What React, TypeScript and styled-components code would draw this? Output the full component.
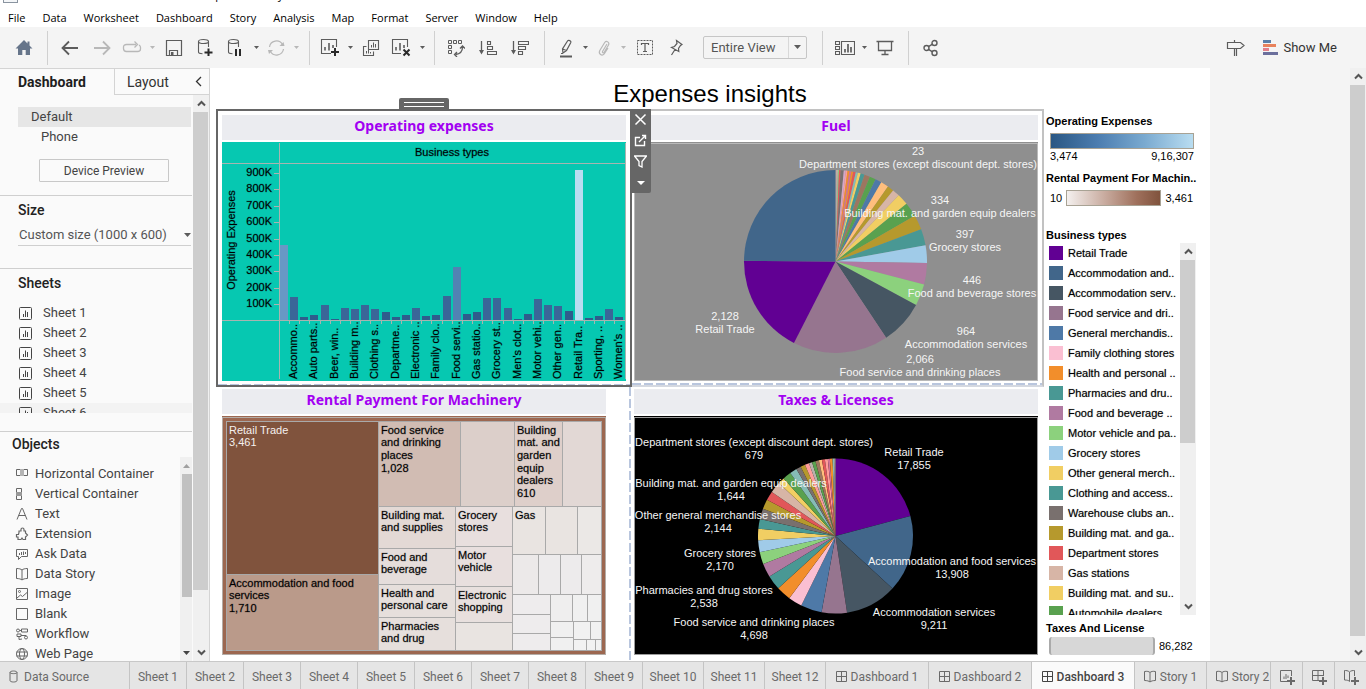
import React from "react";
import styled, { createGlobalStyle, css } from "styled-components";

const ARIAL = `"Liberation Sans", Arial, sans-serif`;
const UI = `Roboto, "Liberation Sans", sans-serif`;
const MENU = `"Open Sans", "Noto Sans", sans-serif`;

const GlobalStyle = createGlobalStyle`
  * { box-sizing: border-box; }
  html, body, #root { height: 100%; }
  body { margin: 0; overflow: hidden; background: #fff; font-family: ${UI}; color: #444; }
  button, select, input { font: inherit; color: inherit; margin: 0; padding: 0; border: 0; background: none; border-radius: 0; }
  ul { list-style: none; margin: 0; padding: 0; }
  h1, h2, h3 { margin: 0; }
  svg { display: block; flex: none; }
`;

/* ---------- window frame ---------- */

const Page = styled.div`
  display: flex;
  flex-direction: column;
  height: 100vh;
`;

const TitleBar = styled.header`
  display: flex;
  align-items: flex-end;
  height: 5px;
  padding-left: 3px;
  overflow: hidden;
  font: 11px/20px ${MENU};
  color: #000;
  white-space: nowrap;
`;

const AppMark = styled.span`
  width: 15px;
  height: 16px;
  margin: 0 12px 2px 0;
  border: 1px solid #8a94a0;
  background: #f4f6f8;
`;

const MenuBar = styled.nav`
  display: flex;
  align-items: center;
  height: 22px;
  padding: 3px 0 0 8px;
  gap: 17px;
  font: 11px/16px ${MENU};
  color: #000;
  white-space: nowrap;
`;

const Toolbar = styled.div`
  display: flex;
  align-items: center;
  height: 41px;
  background: #f4f4f4;
`;

const ToolGroup = styled.div<{ $start?: number; $end?: number; $last?: boolean }>`
  display: flex;
  align-items: center;
  height: 34px;
  padding-left: ${(p) => p.$start ?? 6}px;
  padding-right: ${(p) => p.$end ?? 7}px;
  border-right: ${(p) => (p.$last ? "0" : "1px solid #d0d0d0")};
`;

const ToolButton = styled.button<{ $w?: number; $dim?: boolean }>`
  display: flex;
  align-items: center;
  justify-content: center;
  width: ${(p) => p.$w ?? 30}px;
  height: 30px;
  color: ${(p) => (p.$dim ? "#b8b8b8" : "#5c5c5c")};
`;

const FitBox = styled.label`
  position: relative;
  display: flex;
  width: 104px;
  height: 23px;
  margin: 0 0 0 12px;
  border: 1px solid #c6c6c6;
  border-radius: 2px;
  select {
    width: 100%;
    padding-left: 7px;
    appearance: none;
    font: 13px/21px ${UI};
    color: #555;
  }
  svg { position: absolute; right: 5px; top: 8px; }
  &::after {
    content: "";
    position: absolute;
    right: 17px;
    top: 0;
    bottom: 0;
    border-left: 1px solid #d8d8d8;
  }
`;

const ToolSpacer = styled.div`
  flex: 1;
`;

const ShowMe = styled.button`
  display: flex;
  align-items: center;
  gap: 5px;
  margin: 0 29px 0 17px;
  font: 13px/20px ${UI};
  color: #333;
`;

const Main = styled.main`
  display: flex;
  flex: 1;
  min-height: 0;
`;

/* ---------- scrollbars ---------- */

const Track = styled.div<{ $w?: number }>`
  display: flex;
  flex: none;
  flex-direction: column;
  align-items: center;
  width: ${(p) => p.$w ?? 16}px;
  background: #f0f0f0;
`;

const ArrowCell = styled.span<{ $h?: number }>`
  display: flex;
  flex: none;
  align-items: center;
  justify-content: center;
  height: ${(p) => p.$h ?? 17}px;
`;

const Thumb = styled.span<{ $size: number; $w?: number; $tone?: string }>`
  flex: 0 1 ${(p) => p.$size}px;
  align-self: ${(p) => (p.$w ? "flex-end" : "flex-start")};
  width: ${(p) => p.$w ?? 15}px;
  background: ${(p) => p.$tone ?? "#cdcdcd"};
`;

const Rest = styled.span`
  flex: 1;
`;

/* ---------- side panel ---------- */

const Side = styled.aside`
  display: flex;
  flex: none;
  flex-direction: column;
  width: 210px;
  border-top: 1px solid #d4d4d4;
  border-right: 1px solid #d4d4d4;
  background: #fafafa;
`;

const SideTabs = styled.div`
  display: flex;
  flex: none;
  height: 26px;
  font-size: 14px;
  line-height: 24px;
`;

const SideTab = styled.button<{ $active?: boolean }>`
  text-align: left;
  ${(p) =>
    p.$active
      ? css`
          width: 114px;
          padding-left: 18px;
          font-weight: 700;
          color: #1e1e1e;
        `
      : css`
          flex: 1;
          display: flex;
          align-items: center;
          justify-content: space-between;
          padding: 0 7px 0 12px;
          border-left: 1px solid #d4d4d4;
          border-bottom: 1px solid #d4d4d4;
          color: #333;
        `}
`;

const SideBody = styled.div`
  display: flex;
  flex: 1;
  min-height: 0;
`;

const SideContent = styled.div`
  display: flex;
  flex: 1;
  flex-direction: column;
  min-width: 0;
  margin-right: 1px;
  font-size: 13px;
  line-height: 20px;
`;

const Devices = styled.section`
  flex: none;
  height: 100px;
  padding: 12px 1px 0 18px;
`;

const Device = styled.button<{ $active?: boolean }>`
  display: block;
  width: 100%;
  height: 20px;
  padding-left: ${(p) => (p.$active ? 13 : 23)}px;
  text-align: left;
  background: ${(p) => (p.$active ? "#e6e6e6" : "transparent")};
`;

const PreviewButton = styled.button`
  display: block;
  width: 130px;
  height: 23px;
  margin: 12px 0 0 21px;
  border: 1px solid #c8c8c8;
  border-radius: 1px;
  font-size: 12px;
`;

const Section = styled.section<{ $h?: number }>`
  flex: ${(p) => (p.$h ? "none" : "1")};
  height: ${(p) => (p.$h ? p.$h + "px" : "auto")};
  min-height: 0;
  padding-left: 18px;
  border-top: 1px solid #cfcfcf;
  overflow: hidden;
`;

const SectionTitle = styled.h2`
  padding-top: 4px;
  font: 500 14px/20px ${UI};
  color: #222;
`;

const SizeBox = styled.label`
  position: relative;
  display: block;
  height: 26px;
  margin-right: 1px;
  border-bottom: 1px solid #cfcfcf;
  select {
    width: 100%;
    height: 25px;
    padding: 4px 0 0 1px;
    appearance: none;
    color: #555;
    font-size: 13px;
  }
  svg { position: absolute; right: 0; top: 13px; }
`;

const SheetList = styled.ul`
  height: 110px;
  margin: 10px 0 0 -18px;
  overflow: hidden;
`;

const SheetItem = styled.li<{ $hover?: boolean }>`
  display: flex;
  align-items: center;
  gap: 11px;
  height: 20px;
  padding-left: 19px;
  background: ${(p) => (p.$hover ? "#f3f3f3" : "transparent")};
`;

const ObjectsSection = styled(Section)`
  display: flex;
  flex-direction: column;
  padding-left: 12px;
  ${SectionTitle} { padding-top: 2px; }
`;

const ObjectsBody = styled.div`
  display: flex;
  flex: 1;
  min-height: 0;
  margin-top: 3px;
`;

const ObjectList = styled.ul`
  flex: 1;
  padding: 7px 0 0 3px;
  overflow: hidden;
`;

const ObjectItem = styled.li`
  display: flex;
  align-items: center;
  gap: 6px;
  height: 20px;
  svg { color: #666; }
`;

/* ---------- dashboard canvas ---------- */

const Stage = styled.div`
  display: flex;
  flex: 1;
  min-width: 0;
  background: #f4f4f4;
`;

const Canvas = styled.div`
  flex: 0 1 1000px;
  min-width: 0;
  padding: 0 13px 0 6px;
  overflow: hidden;
  background: #fff;
`;

const CanvasTitle = styled.h1`
  height: 41px;
  padding: 11px 0 0 7px;
  font: 24px/30px ${ARIAL};
  text-align: center;
  color: #000;
`;

const Board = styled.div`
  display: grid;
  grid-template-columns: minmax(0, 416fr) minmax(0, 412fr) 153px;
`;

const Quad = styled.div`
  display: grid;
  grid-column: span 2;
  grid-template-columns: subgrid;
  align-content: start;
`;

const dashX = `repeating-linear-gradient(90deg, #b9c6de 0 9px, transparent 9px 12px)`;
const dashY = `repeating-linear-gradient(180deg, #b9c6de 0 9px, transparent 9px 12px)`;

const Zone = styled.section<{ $kind: "selected" | "outlined" | "left" | "right" }>`
  position: relative;
  ${(p) => {
    if (p.$kind === "selected")
      return css`
        z-index: 1;
        padding: 4px;
        border: 2px solid #666;
        &::before {
          content: "";
          position: absolute;
          inset: auto 0 0 0;
          height: 1px;
          background: ${dashX};
        }
      `;
    if (p.$kind === "outlined")
      return css`
        padding: 4px 4px 4px 2px;
        border: 2px solid #c2c2c2;
        border-left: 0;
        border-bottom-color: #d4d8e0;
        &::before {
          content: "";
          position: absolute;
          inset: auto 0 0 0;
          height: 2px;
          background: ${dashX};
        }
      `;
    if (p.$kind === "left")
      return css`
        padding: 2px 26px 6px 6px;
        &::before {
          content: "";
          position: absolute;
          inset: 0 1px 0 auto;
          width: 2px;
          background: ${dashY};
        }
      `;
    return css`
      padding: 2px 6px 6px 2px;
    `;
  }}
`;

const ZoneTitle = styled.h2`
  height: 25px;
  margin-bottom: 2px;
  background: #ebecf0;
  font: 700 14px/22px "Noto Sans", "Open Sans", sans-serif;
  text-align: center;
  color: #a200f2;
`;

const Chart = styled.svg`
  width: 100%;
  height: auto;
  font: 11px ${ARIAL};
`;

/* marks drawn in dark ink on a coloured ground get a slightly heavier face */
const Ink = styled.g`
  fill: #000;
  stroke: #000;
  stroke-width: 1px;
  stroke-opacity: 0.22;
`;

const Grip = styled.div`
  position: absolute;
  top: -13px;
  left: 181px;
  display: flex;
  flex-direction: column;
  justify-content: center;
  gap: 3px;
  width: 50px;
  height: 12px;
  padding: 0 5px;
  border-radius: 2px 2px 0 0;
  background: #666;
  i { height: 1px; background: #fff; }
`;

const ZoneTools = styled.div`
  position: absolute;
  top: -2px;
  right: -21px;
  display: flex;
  flex-direction: column;
  align-items: center;
  width: 21px;
  height: 84px;
  border-radius: 0 0 2px 2px;
  background: #666;
  color: #fff;
  button {
    display: flex;
    align-items: center;
    justify-content: center;
    width: 21px;
    height: 21px;
  }
`;

/* ---------- legends ---------- */

const Legends = styled.div`
  padding: 5px 0 0 2px;
  font: 11px/14px ${ARIAL};
  color: #000;
  white-space: nowrap;
`;

const LegendTitle = styled.h3`
  font: 700 11px/14px ${ARIAL};
`;

const Ramp = styled.div<{ $tone: "blue" | "brown" }>`
  flex: 1;
  height: 16px;
  border: 1px solid #a8a294;
  background: ${(p) =>
    p.$tone === "blue"
      ? "linear-gradient(90deg, #2a5783, #4c7db0 33%, #7aaad0 66%, #b9ddf1)"
      : "linear-gradient(90deg, #f4f0ee, #c9aca0 40%, #9f705c 75%, #80533d)"};
`;

const RampBlock = styled.div`
  margin: 5px 3px 8px 4px;
`;

const RampEnds = styled.div`
  display: flex;
  justify-content: space-between;
`;

const RampLine = styled.div`
  display: flex;
  align-items: center;
  gap: 4px;
  margin: 5px 4px 22px 4px;
`;

const KeyBox = styled.div`
  display: flex;
  height: 372px;
  margin: 1px 1px 6px 3px;
`;

const KeyList = styled.ul`
  flex: 1;
  min-width: 0;
  overflow: hidden;
`;

const KeyItem = styled.li`
  display: flex;
  align-items: center;
  gap: 5px;
  height: 20px;
  text-shadow: 0 0 1px rgba(0, 0, 0, 0.45);
`;

const Swatch = styled.span<{ $c: string }>`
  width: 14px;
  height: 14px;
  background: ${(p) => p.$c};
`;

const SizeKey = styled.div`
  display: flex;
  align-items: center;
  gap: 4px;
  margin: 2px 0 0 3px;
  span {
    width: 106px;
    height: 18px;
    border: solid #aaa;
    border-width: 0 2px;
    border-radius: 3px;
    background: #d7d7d7;
  }
`;

/* ---------- sheet tabs ---------- */

const TabStrip = styled.footer`
  display: flex;
  flex: none;
  height: 28px;
  border-top: 1px solid #c8c8c8;
  background: #e5e5e5;
  font: 12px/20px ${UI};
  color: #6a6a6a;
`;

const TabRow = styled.div`
  display: flex;
  flex: 1;
  min-width: 0;
  overflow: hidden;
`;

const Tab = styled.button<{ $w: number; $active?: boolean; $lead?: boolean }>`
  display: flex;
  flex: none;
  align-items: center;
  justify-content: ${(p) => (p.$lead ? "flex-start" : "center")};
  gap: ${(p) => (p.$lead ? 6 : 4)}px;
  width: ${(p) => p.$w}px;
  padding: 2px 0 0 ${(p) => (p.$lead ? 9 : 0)}px;
  border-right: 1px solid #c4c4c4;
  white-space: nowrap;
  ${(p) =>
    p.$active &&
    css`
      background: #fafafa;
      color: #444;
      font-weight: 500;
    `}
`;

const AddTab = styled.button`
  display: flex;
  align-items: center;
  justify-content: center;
  width: 32px;
  padding-top: 2px;
  border-left: 1px solid #c4c4c4;
`;

/* ---------- icons ---------- */

type IconProps = { w?: number; h?: number; children: React.ReactNode };
const Icon = ({ w = 20, h = 20, children }: IconProps) => (
  <svg width={w} height={h} viewBox={`0 0 ${w} ${h}`} fill="none" stroke="currentColor" aria-hidden="true">
    {children}
  </svg>
);

const Caret = ({ c = "#5c5c5c", w = 5, h = 3 }: { c?: string; w?: number; h?: number }) => (
  <svg width={w} height={h} viewBox={`0 0 ${w} ${h}`} aria-hidden="true">
    <path d={`M0 0H${w}L${w / 2} ${h}Z`} fill={c} />
  </svg>
);

const Chevron = ({ down = false }: { down?: boolean }) => (
  <svg width="9" height="7" viewBox="0 0 9 7" fill="none" stroke="#555" strokeWidth="2" aria-hidden="true">
    <path d={down ? "M1 1.5L4.5 5L8 1.5" : "M1 5.5L4.5 2L8 5.5"} />
  </svg>
);

const HomeIcon = () => (
  <svg width="18" height="17" viewBox="0 0 18 17" aria-hidden="true">
    <path d="M9 1L0.5 9.5H3V16H7.3V11H10.7V16H15V9.5H17.5L14.5 6.5V2.5H12.5V4.5Z" fill="#66758a" />
  </svg>
);
const BackIcon = () => <Icon><path d="M18 10H3M9 3.5L2.5 10L9 16.5" strokeWidth="1.8" /></Icon>;
const ForwardIcon = () => <Icon><path d="M2 10H17M11 3.5L17.5 10L11 16.5" strokeWidth="1.8" /></Icon>;
const RedoIcon = () => (
  <Icon>
    <path d="M14 6.5H4.5C2.5 6.5 1.5 7.5 1.5 9V10.5C1.5 12 2.5 13.5 4.5 13.5H15.5C17.5 13.5 18.5 12.5 18.5 11V9.500C18.5 8.500 18 7.500 17 7M12.500 3.500L15.500 6.500L12.500 9.500" strokeWidth="1.3" />
  </Icon>
);
const SaveIcon = () => (
  <Icon w={18} h={18}>
    <path d="M1.500 1.500H16.500V16.500H1.500ZM4.500 16V11.500H12.500V16" strokeWidth="1.2" />
    <path d="M6 13H8.500V16H6Z" fill="currentColor" stroke="none" />
  </Icon>
);
const cylinder = "M1.500 3.500C1.500 2.300 3.600 1.500 6.500 1.500C9.400 1.500 11.500 2.300 11.500 3.500C11.500 4.700 9.400 5.500 6.500 5.500C3.600 5.500 1.500 4.700 1.500 3.500V14C1.500 15 3 15.700 5.500 15.700M11.500 3.500V9";
const DataAddIcon = () => (
  <Icon w={16} h={19}>
    <path d={cylinder} strokeWidth="1.1" />
    <path d="M11.500 10.500V18M7.500 14.500H15.500" stroke="#2a2a2a" strokeWidth="2" />
  </Icon>
);
const DataPauseIcon = () => (
  <Icon w={16} h={19}>
    <path d={cylinder} strokeWidth="1.1" />
    <path d="M9 11V18M13 11V18" stroke="#2a2a2a" strokeWidth="2" />
  </Icon>
);
const RefreshIcon = () => (
  <Icon w={19} h={18}>
    <path d="M2.500 8A7 7 0 0 1 15.500 5.500M16.500 10A7 7 0 0 1 3.500 12.500" strokeWidth="1.200" />
    <path d="M12.500 7H17.500L16.500 3ZM1 11H6L2 15Z" fill="currentColor" stroke="none" />
  </Icon>
);
const SheetAddIcon = () => (
  <Icon w={20} h={19}>
    <path d="M11 15.500H1.500V1.500H16.500V9" strokeWidth="1.100" />
    <path d="M5 12.500V9M9 12.500V5M13 10V7" strokeWidth="1.600" />
    <path d="M15 10V18M11 14H19" stroke="#2a2a2a" strokeWidth="2" />
  </Icon>
);
const DuplicateIcon = () => (
  <Icon w={18} h={18}>
    <path d="M6.500 1.500H16.500V10.500H6.500ZM4.500 7.500H1.500V16.500H11.500V12.500" strokeWidth="1.100" />
    <path d="M9.500 8.500V6M11.500 8.500V3.500M13.500 8.500V5M4.500 14.500V12M6.500 14.500V11M8.500 14.500V13" />
  </Icon>
);
const ClearIcon = () => (
  <Icon w={20} h={19}>
    <path d="M10 15.500H1.500V1.500H16.500V9" strokeWidth="1.100" />
    <path d="M5 12.500V9M9 12.500V5M13 10V7" strokeWidth="1.600" />
    <path d="M12.500 11.500L18.500 17.500M18.500 11.500L12.500 17.500" stroke="#2a2a2a" strokeWidth="2" />
  </Icon>
);
const SwapIcon = () => (
  <Icon w={18} h={18}>
    <path d="M1.500 1.500H4.500V4.500H1.500ZM6.500 1.500H9.500V4.500H6.500ZM11.500 1.500H14.500V4.500H11.500ZM1.500 6.500H4.500V9.500H1.500ZM1.500 11.500H4.500V14.500H1.500Z" />
    <path d="M15.500 8C15.500 12 13 15 8.500 15.500M13 9.500L15.500 7L18 9.500M10 13L7.500 15.500L10 18" strokeWidth="1.300" />
  </Icon>
);
const SortAscIcon = () => (
  <Icon w={18} h={18}>
    <path d="M2.500 2V14" strokeWidth="1.300" />
    <path d="M0 11H5L2.500 15.500Z" fill="currentColor" stroke="none" />
    <path d="M8.500 2.500H11.500V5.500H8.500ZM8.500 7.500H13.500V10.500H8.500ZM8.500 12.500H17.500V15.500H8.500Z" strokeWidth="1.100" />
  </Icon>
);
const SortDescIcon = () => (
  <Icon w={18} h={18}>
    <path d="M2.500 2V14" strokeWidth="1.300" />
    <path d="M0 11H5L2.500 15.500Z" fill="currentColor" stroke="none" />
    <path d="M7.500 2.500H17.500V5.500H7.500ZM7.500 7.500H14.500V10.500H7.500ZM7.500 12.500H11.500V15.500H7.500Z" strokeWidth="1.100" />
  </Icon>
);
const HighlightIcon = () => (
  <Icon w={16} h={20}>
    <path d="M9.500 3C10.500 1.500 13.500 3 12.800 4.500L8.500 12.500L5 15L4.500 11ZM4.500 11L8.500 12.500" strokeWidth="1.200" />
    <path d="M3 15.500H5" />
    <path d="M2 18.500H14" strokeWidth="2" />
  </Icon>
);
const ClipIcon = () => (
  <Icon w={16} h={18}>
    <path d="M11 5L6.500 12.500C6 13.500 7.500 14.300 8.200 13.300L12.500 6C13.800 3.500 10.500 1 8.700 3.500L3.800 11.500C2 15 6 17.500 8.200 14.800L12 9" strokeWidth="1.200" />
  </Icon>
);
const TextFrameIcon = () => (
  <Icon w={18} h={17}>
    <path d="M1.500 1.500H16.500V15.500H1.500Z" strokeDasharray="2 1" />
    <path d="M5.500 6V4.500H12.500V6M9 4.500V12.500M7 12.500H11" strokeWidth="1.200" />
  </Icon>
);
const PinIcon = () => (
  <Icon w={14} h={18}>
    <path d="M7.500 1.500L13 5.500L11.500 6.500L9.500 9.500L9.800 12.500L2.500 8.500L5.500 7.500L8 4.500ZM6 10.500L2.500 16" strokeWidth="1.200" />
  </Icon>
);
const CardsIcon = () => (
  <Icon w={20} h={16}>
    <path d="M6.500 1.500H19.500V14.500H6.500ZM0.500 1.500H4.500V4.500H0.500ZM0.500 6.500H4.500V9.500H0.500ZM0.500 11.500H4.500V14.500H0.500Z" strokeWidth="1.100" />
    <path d="M10 12.500V9M13 12.500V4M16 12.500V7" strokeWidth="1.700" />
  </Icon>
);
const PresentIcon = () => (
  <Icon w={18} h={17}>
    <path d="M0.500 2.500H17.500M2.500 2.500V11.500H15.500V2.500M9 11.500V15.500M5.500 15.500H12.500" strokeWidth="1.300" />
  </Icon>
);
const ShareIcon = () => (
  <Icon w={16} h={18}>
    <circle cx="3.500" cy="9" r="2.500" strokeWidth="1.400" />
    <circle cx="11.500" cy="4" r="2.500" strokeWidth="1.400" />
    <circle cx="11.500" cy="14" r="2.500" strokeWidth="1.400" />
    <path d="M5.500 7.600L9.500 5.200M5.500 10.400L9.500 12.800" strokeWidth="1.400" />
  </Icon>
);
const SignIcon = () => (
  <Icon w={20} h={18}>
    <path d="M1.500 3.500H14.500L18 6.500L14.500 9.500H1.500ZM8.500 3.500V1M8.500 9.500V17M10.500 9.500V17" strokeWidth="1.200" />
  </Icon>
);
const ShowMeIcon = () => (
  <svg width="15" height="15" viewBox="0 0 15 15" aria-hidden="true">
    <path d="M0 0H8V3H0Z" fill="#5b7fa8" />
    <path d="M0 4H13V7H0Z" fill="#e8825c" />
    <path d="M0 8H6V11H0Z" fill="#e37f8a" />
    <path d="M0 12H15V15H0Z" fill="#6b6f9c" />
  </svg>
);

const SheetIcon = () => (
  <Icon w={13} h={13}>
    <rect x="0.500" y="0.500" width="12" height="12" rx="1" />
    <path d="M4.500 10V7M6.500 10V3.500M8.500 10V5" />
  </Icon>
);
const GridIcon = () => (
  <Icon w={11} h={11}>
    <path d="M0.500 0.500H10.500V10.500H0.500ZM5.500 0.500V10.500M0.500 5.500H10.500" />
  </Icon>
);
const BookIcon = () => (
  <Icon w={12} h={13}>
    <path d="M6 2.500C5 1.500 3 1 0.500 1.500V10.500C3 10.500 5 11 6 12C7 11 9 10.500 11.500 10.500V1.500C9 1 7 1.500 6 2.500ZM6 2.500V12" />
  </Icon>
);
const DiskIcon = () => (
  <Icon w={9} h={13}>
    <path d="M1 2.500C1 0.500 8 0.500 8 2.500C8 4 1 4 1 2.500V10.500C1 12.500 8 12.500 8 10.500V2.500" />
  </Icon>
);

const objectIcons: Record<string, React.ReactNode> = {
  "Horizontal Container": (
    <>
      <path d="M1.500 2.500H5.500V8.500H1.500ZM8.500 2.500H12.500V8.500H8.500Z" />
      <path d="M5 2H9V9H5Z" fill="#b4b4b4" stroke="none" />
    </>
  ),
  "Vertical Container": (
    <>
      <path d="M1.500 1.500H6.500V5.500H1.500ZM1.500 8.500H6.500V12.500H1.500Z" />
      <path d="M1 5H7V9H1Z" fill="#999" stroke="none" />
    </>
  ),
  Text: <path d="M2 12.500L6.500 1.500H7.500L12 12.500M3.500 8.500H10.500" />,
  Extension: <path d="M4 5.500V4H6V2.500A1.500 1.500 0 0 1 9 2.500V4H10.500V6L12.500 8L10.500 10V12.500H8L7 11L6 12.500H3V10H1.500V7.500H3.500Z" strokeWidth="1.200" />,
  "Ask Data": <path d="M1.500 2.500H12.500V9.500H6.500L3.500 12.500V9.500H1.500ZM4.500 8V6M6.500 8V5M8.500 8V4.500M10.500 7V5" />,
  "Data Story": <path d="M7 3C6 2 4 1.500 1.500 1.500V11.500C4 11.500 6 12 7 13C8 12 10 11.500 12.500 11.500V1.500C10 1.500 8 2 7 3ZM7 3V13" />,
  Image: (
    <>
      <path d="M1.500 1.500H12.500V12.500H1.500ZM2 11L5.500 8L7.500 9.500L12 5.500" />
      <circle cx="4.500" cy="4.500" r="1" />
    </>
  ),
  Blank: <path d="M1.500 1.500H12.500V12.500H1.500Z" />,
  Workflow: (
    <>
      <circle cx="3" cy="3.500" r="1.500" />
      <circle cx="11" cy="10.500" r="1.500" />
      <path d="M4.500 3.500H6M6.500 2H12.500V5H6.500ZM2 7H6V9.500H2ZM6 8.500H11V9M4 9.500V12.500L7 12" />
    </>
  ),
  "Web Page": (
    <>
      <circle cx="7" cy="7" r="5.500" />
      <ellipse cx="7" cy="7" rx="2.500" ry="5.500" />
      <path d="M1.500 5H12.500M1.500 9H12.500" />
    </>
  ),
};

/* ---------- data ---------- */

const purple = "#610093";
const steel = "#41668a";
const slate = "#465663";
const plum = "#96758f";

const bars = [75, 23, 3, 5, 15, 1, 12, 11, 15, 11, 8, 3, 5, 12, 4, 5, 24, 53, 6, 8, 22, 22, 12, 1, 6, 21, 15, 14, 9, 150, 2, 4, 11, 3];
const barLabels = [
  "Accommo..", "Auto parts..", "Beer, win..", "Building m..", "Clothing s..", "Departme..", "Electronic ..", "Family clo..",
  "Food servi..", "Gas statio..", "Grocery st..", "Men's clot..", "Motor vehi..", "Other gen..", "Retail Tra..", "Sporting, ..", "Women's ..",
];

const barColor = (v: number) =>
  v > 100 ? "#b9ddf1" : v > 70 ? "#6898c5" : v > 40 ? "#5282b3" : v > 10 ? "#3a6698" : "#2f5c8c";

/* each slice is a colour and the angle, clockwise from the top, where it ends */
type Slice = [string, number];
const fuelSlices: Slice[] = [
  ["#d7b5a6", 0.8], ["#bab0ac", 1.6], ["#8cd17d", 2.2], ["#e15759", 3.2], ["#79706e", 5.2], ["#d4a6c8", 6.5], ["#ff9d9a", 7.6],
  ["#f28e2b", 8.8], ["#d37295", 10], ["#f28e2b", 11.2], ["#e15759", 12.8], ["#86bcb6", 14.2], ["#f1ce63", 16], ["#499894", 18.5],
  ["#9d7660", 22], ["#59a14f", 26], ["#4e79a7", 30], ["#ffbe7d", 35], ["#b6992d", 39], ["#d7b5a6", 43.7], ["#f1ce63", 50.9],
  ["#59a14f", 60], ["#b6992d", 69.4], ["#499894", 79.8], ["#a0cbe8", 91], ["#b07aa1", 104.5], ["#8cd17d", 118.3], [slate, 146.4],
  [plum, 207], [purple, 270.4], [steel, 360],
];
const taxSlices: Slice[] = [
  [purple, 75], [steel, 132.7], [slate, 171.4], [plum, 190.4], ["#4e79a7", 206.2], ["#fabfd2", 216.6], ["#f28e2b", 227.6],
  ["#499894", 238.6], ["#b07aa1", 248.9], ["#8cd17d", 257.9], ["#a0cbe8", 266.8], ["#f1ce63", 275.4], ["#499894", 282.6],
  ["#79706e", 290.6], ["#b6992d", 297.9], ["#e15759", 304.7], ["#d7b5a6", 313.1], ["#f1ce63", 318], ["#59a14f", 324.3],
  ["#86bcb6", 329.7], ["#79706e", 333.3], ["#b6992d", 336.8], ["#ff9d9a", 340], ["#bab0ac", 342.4], ["#59a14f", 345],
  ["#9d7660", 347.6], ["#ffbe7d", 349.9], ["#e15759", 352.1], ["#ff9d9a", 354.3], ["#d37295", 355.8], ["#f28e2b", 357.8],
  ["#86bcb6", 359], ["#bab0ac", 360],
];

type PieLabel = [number, number, string, string];
const fuelLabels: PieLabel[] = [
  [284, 13, "23", "Department stores (except discount dept. stores)"],
  [306, 62, "334", "Building mat. and garden equip dealers"],
  [331, 96, "397", "Grocery stores"],
  [338, 142, "446", "Food and beverage stores"],
  [332, 193, "964", "Accommodation services"],
  [286, 221, "2,066", "Food service and drinking places"],
  [91, 178, "2,128", "Retail Trade"],
];
const taxLabels: PieLabel[] = [
  [120, 30, "Department stores (except discount dept. stores)", "679"],
  [97, 71, "Building mat. and garden equip dealers", "1,644"],
  [84, 103, "Other general merchandise stores", "2,144"],
  [86, 141, "Grocery stores", "2,170"],
  [70, 178, "Pharmacies and drug stores", "2,538"],
  [120, 210, "Food service and drinking places", "4,698"],
  [300, 200, "Accommodation services", "9,211"],
  [318, 149, "Accommodation and food services", "13,908"],
  [280, 40, "Retail Trade", "17,855"],
];

/* x, y, right, bottom, fill, lines of text */
type Tile = [number, number, number, number, string, string[]?];
const tiles: Tile[] = [
  [4, 5, 156, 158, "#80533d", ["Retail Trade", "3,461"]],
  [4, 158, 156, 234, "#ba9a8a", ["Accommodation and food", "services", "1,710"]],
  [156, 5, 238, 90, "#d1bcb3", ["Food service", "and drinking", "places", "1,028"]],
  [238, 5, 292, 90, "#dccfca"],
  [292, 5, 340, 90, "#decfca", ["Building", "mat. and", "garden", "equip", "dealers", "610"]],
  [340, 5, 379, 90, "#e2d8d5"],
  [156, 90, 233, 132, "#e3d9d5", ["Building mat.", "and supplies"]],
  [156, 132, 233, 168, "#e5dddb", ["Food and", "beverage"]],
  [156, 168, 233, 201, "#e6dfdc", ["Health and", "personal care"]],
  [156, 201, 233, 234, "#e6dfdc", ["Pharmacies", "and drug"]],
  [233, 90, 290, 130, "#e8dfde", ["Grocery", "stores"]],
  [233, 130, 290, 170, "#e8dfde", ["Motor", "vehicle"]],
  [233, 170, 290, 206, "#e8e0de", ["Electronic", "shopping"]],
  [233, 206, 290, 234, "#e9e4e1"],
  [290, 90, 323, 138, "#e9e4e1", ["Gas"]],
  [323, 90, 355, 138, "#e9e4e1"],
  [355, 90, 379, 138, "#ebe8e6"],
  [290, 138, 316, 178, "#ece9e9"],
  [316, 138, 338, 178, "#edebec"],
  [338, 138, 359, 178, "#edebec"],
  [359, 138, 379, 178, "#eeecec"],
  [290, 178, 328, 198, "#eeeced"],
  [290, 198, 328, 217, "#eeeced"],
  [290, 217, 328, 234, "#eeeced"],
  [328, 178, 350, 205, "#efeeee"],
  [350, 178, 365, 205, "#f0f0f0"],
  [365, 178, 379, 205, "#f0f0f0"],
  [328, 205, 351, 221, "#f0f0f0"],
  [328, 221, 351, 234, "#f0f0f0"],
  [351, 205, 368, 223, "#f1f1f1"],
  [368, 205, 379, 223, "#f1f1f1"],
  [351, 223, 364, 234, "#f2f2f2"],
  [364, 223, 373, 234, "#f2f2f2"],
  [373, 223, 379, 234, "#f2f2f2"],
];

const keyItems: [string, string][] = [
  [purple, "Retail Trade"], [steel, "Accommodation and.."], [slate, "Accommodation serv.."], [plum, "Food service and dri.."],
  ["#4e79a7", "General merchandis.."], ["#fabfd2", "Family clothing stores"], ["#f28e2b", "Health and personal .."],
  ["#499894", "Pharmacies and dru.."], ["#b07aa1", "Food and beverage .."], ["#8cd17d", "Motor vehicle and pa.."],
  ["#a0cbe8", "Grocery stores"], ["#f1ce63", "Other general merch.."], ["#499894", "Clothing and access.."],
  ["#79706e", "Warehouse clubs an.."], ["#b6992d", "Building mat. and ga.."], ["#e15759", "Department stores"],
  ["#d7b5a6", "Gas stations"], ["#f1ce63", "Building mat. and su.."], ["#59a14f", "Automobile dealers"],
];

/* ---------- charts ---------- */

const slicePath = (cx: number, cy: number, r: number, from: number, to: number) => {
  const at = (deg: number) => {
    const a = (deg * Math.PI) / 180;
    return `${(cx + r * Math.sin(a)).toFixed(2)} ${(cy - r * Math.cos(a)).toFixed(2)}`;
  };
  return `M${cx} ${cy}L${at(from)}A${r} ${r} 0 ${to - from > 180 ? 1 : 0} 1 ${at(to)}Z`;
};

const Pie = ({ cx, cy, r, slices }: { cx: number; cy: number; r: number; slices: Slice[] }) => (
  <g>
    {slices.map(([color, end], i) => (
      <path key={i} d={slicePath(cx, cy, r, i ? slices[i - 1][1] : 0, end)} fill={color} />
    ))}
  </g>
);

const PieLabels = ({ items }: { items: PieLabel[] }) => (
  <g fill="#f5f5f5" textAnchor="middle">
    {items.map(([x, y, first, second], i) => (
      <React.Fragment key={i}>
        <text x={x} y={y}>{first}</text>
        <text x={x} y={y + 13}>{second}</text>
      </React.Fragment>
    ))}
  </g>
);

const OperatingChart = () => {
  const pitch = 345.5 / bars.length;
  return (
    <Chart viewBox="0 0 404 239" role="img" aria-label="Operating expenses by business type">
      <rect width="404" height="239" fill="#06c8b1" />
      <g stroke="#a8b4b0" shapeRendering="crispEdges">
        <path d="M57.500 1V237M0 21.500H404M403.500 1V237" />
        {Array.from({ length: 9 }, (_, i) => (
          <path key={i} d={`M52 ${Math.round(31 + i * 16.4) + 0.5}H57`} />
        ))}
      </g>
      <Ink textAnchor="end">
        {Array.from({ length: 9 }, (_, i) => (
          <text key={i} x="50" y={Math.round(34 + i * 16.4)}>{`${9 - i}00K`}</text>
        ))}
      </Ink>
      <Ink textAnchor="middle">
        <text x="230" y="14">Business types</text>
        <text transform="translate(13 98) rotate(-90)">Operating Expenses</text>
      </Ink>
      <g shapeRendering="crispEdges">
        {bars.map((h, i) => (
          <rect key={i} x={Math.round(58 + i * pitch)} y={178 - h} width="8" height={h} fill={barColor(h)} />
        ))}
        <path
          d={"M0 178.500H404" + bars.map((_, i) => `M${Math.round(57 + (i + 1) * pitch) + 0.5} 179V182`).join("")}
          stroke="#a8b4b0"
        />
      </g>
      <Ink>
        {barLabels.map((t, i) => (
          <text key={i} transform={`translate(${Math.round(65 + (2 * i + 1) * pitch)} 237) rotate(-90)`}>{t}</text>
        ))}
      </Ink>
    </Chart>
  );
};

const FuelChart = () => (
  <Chart viewBox="0 0 404 239" role="img" aria-label="Fuel by business type">
    <rect width="404" height="239" fill="#8f8f8f" />
    <path d="M0.500 238.500V1.500H403.500V238.500Z" fill="none" stroke="#b9b9b9" shapeRendering="crispEdges" />
    <Pie cx={201.5} cy={119.5} r={91.5} slices={fuelSlices} />
    <PieLabels items={fuelLabels} />
  </Chart>
);

const TaxChart = () => (
  <Chart viewBox="0 0 404 239" role="img" aria-label="Taxes and licenses by business type">
    <rect width="404" height="239" fill="#000" />
    <path d="M0.500 238.500V1.500H403.500V238.500Z" fill="none" stroke="#9b9b9b" shapeRendering="crispEdges" />
    <Pie cx={201.5} cy={120} r={77.5} slices={taxSlices} />
    <PieLabels items={taxLabels} />
  </Chart>
);

const TileText = ({ tile }: { tile: Tile }) => (
  <>
    {tile[5]?.map((t, n) => (
      <text key={t} x={tile[0] + 3} y={tile[1] + 13 + Math.floor(n * 12.7)}>{t}</text>
    ))}
  </>
);

const RentalChart = () => (
  <Chart viewBox="0 0 384 239" role="img" aria-label="Rental payment for machinery by business type">
    <rect width="384" height="239" fill="#9c6750" />
    <path d="M0.500 238.500V1.500H383.500V238.500Z" fill="none" stroke="#b4aca6" shapeRendering="crispEdges" />
    {tiles.map((tile, i) => {
      const [x, y, r, b, fill] = tile;
      return (
        <g key={i}>
          <rect x={x + 0.5} y={y + 0.5} width={r - x} height={b - y} fill={fill} stroke="#a9a9a9" shapeRendering="crispEdges" />
          {i === 0 ? <g fill="#f5f0ee"><TileText tile={tile} /></g> : <Ink><TileText tile={tile} /></Ink>}
        </g>
      );
    })}
  </Chart>
);

/* ---------- page ---------- */

const menus = ["File", "Data", "Worksheet", "Dashboard", "Story", "Analysis", "Map", "Format", "Server", "Window", "Help"];

export default function App() {
  return (
    <Page>
      <GlobalStyle />
      <TitleBar>
        <AppMark />
        <span>Tableau - Book1 - Tableau license expires in 9 days</span>
      </TitleBar>
      <MenuBar>
        {menus.map((m) => (
          <button key={m}>{m}</button>
        ))}
      </MenuBar>

      <Toolbar>
        <ToolGroup $start={9} $end={8}><ToolButton aria-label="Home"><HomeIcon /></ToolButton></ToolGroup>
        <ToolGroup $start={6} $end={7}>
          <ToolButton $w={32} aria-label="Undo"><BackIcon /></ToolButton>
          <ToolButton $w={32} $dim aria-label="Redo"><ForwardIcon /></ToolButton>
          <ToolButton $w={28} $dim aria-label="Replay"><RedoIcon /></ToolButton>
          <ToolButton $w={12} aria-label="Replay options"><Caret c="#b8b8b8" /></ToolButton>
          <ToolButton $w={32} aria-label="Save"><SaveIcon /></ToolButton>
          <ToolButton aria-label="New data source"><DataAddIcon /></ToolButton>
          <ToolButton aria-label="Pause updates"><DataPauseIcon /></ToolButton>
          <ToolButton $w={12} aria-label="Pause options"><Caret /></ToolButton>
          <ToolButton $w={28} $dim aria-label="Refresh"><RefreshIcon /></ToolButton>
          <ToolButton $w={12} aria-label="Refresh options"><Caret c="#b8b8b8" /></ToolButton>
        </ToolGroup>
        <ToolGroup $start={6} $end={6}>
          <ToolButton $w={28} aria-label="New worksheet"><SheetAddIcon /></ToolButton>
          <ToolButton $w={12} aria-label="New sheet options"><Caret /></ToolButton>
          <ToolButton aria-label="Duplicate"><DuplicateIcon /></ToolButton>
          <ToolButton aria-label="Clear sheet"><ClearIcon /></ToolButton>
          <ToolButton $w={12} aria-label="Clear options"><Caret /></ToolButton>
        </ToolGroup>
        <ToolGroup $start={5} $end={8}>
          <ToolButton $w={32} aria-label="Swap rows and columns"><SwapIcon /></ToolButton>
          <ToolButton $w={32} aria-label="Sort ascending"><SortAscIcon /></ToolButton>
          <ToolButton $w={32} aria-label="Sort descending"><SortDescIcon /></ToolButton>
        </ToolGroup>
        <ToolGroup $start={8} $end={15}>
          <ToolButton $w={26} aria-label="Highlight"><HighlightIcon /></ToolButton>
          <ToolButton $w={12} aria-label="Highlight options"><Caret /></ToolButton>
          <ToolButton $w={26} $dim aria-label="Group members"><ClipIcon /></ToolButton>
          <ToolButton $w={12} aria-label="Group options"><Caret c="#b8b8b8" /></ToolButton>
          <ToolButton $w={32} aria-label="Show mark labels"><TextFrameIcon /></ToolButton>
          <ToolButton aria-label="Fix axes"><PinIcon /></ToolButton>
          <FitBox>
            <select aria-label="Fit" defaultValue="Entire View">
              <option>Entire View</option>
              <option>Standard</option>
            </select>
            <Caret w={7} h={4} />
          </FitBox>
        </ToolGroup>
        <ToolGroup $start={9} $end={8}>
          <ToolButton $w={26} aria-label="Show or hide cards"><CardsIcon /></ToolButton>
          <ToolButton $w={12} aria-label="Card options"><Caret /></ToolButton>
          <ToolButton aria-label="Presentation mode"><PresentIcon /></ToolButton>
        </ToolGroup>
        <ToolGroup $start={7} $last>
          <ToolButton aria-label="Share"><ShareIcon /></ToolButton>
        </ToolGroup>
        <ToolSpacer />
        <ToolButton $w={20} aria-label="Guide"><SignIcon /></ToolButton>
        <ShowMe><ShowMeIcon />Show Me</ShowMe>
      </Toolbar>

      <Main>
        <Side>
          <SideTabs>
            <SideTab $active>Dashboard</SideTab>
            <SideTab>
              Layout
              <Icon w={7} h={11}><path d="M6 1L1.500 5.500L6 10" strokeWidth="1.300" /></Icon>
            </SideTab>
          </SideTabs>
          <SideBody>
            <SideContent>
              <Devices>
                <Device $active>Default</Device>
                <Device>Phone</Device>
                <PreviewButton>Device Preview</PreviewButton>
              </Devices>
              <Section $h={73}>
                <SectionTitle>Size</SectionTitle>
                <SizeBox>
                  <select aria-label="Size" defaultValue="c">
                    <option value="c">Custom size (1000 x 600)</option>
                    <option value="a">Automatic</option>
                  </select>
                  <Caret w={7} h={4} />
                </SizeBox>
              </Section>
              <Section $h={163}>
                <SectionTitle>Sheets</SectionTitle>
                <SheetList>
                  {[1, 2, 3, 4, 5, 6].map((n) => (
                    <SheetItem key={n} $hover={n === 6}><SheetIcon />{`Sheet ${n}`}</SheetItem>
                  ))}
                </SheetList>
              </Section>
              <ObjectsSection>
                <SectionTitle>Objects</SectionTitle>
                <ObjectsBody>
                  <ObjectList>
                    {Object.keys(objectIcons).map((name) => (
                      <ObjectItem key={name}><Icon w={14} h={14}>{objectIcons[name]}</Icon>{name}</ObjectItem>
                    ))}
                  </ObjectList>
                  <Track $w={12}>
                    <ArrowCell><svg width="7" height="4"><path d="M0 4L3.500 0L7 4Z" fill="#a0a0a0" /></svg></ArrowCell>
                    <Thumb $size={123} $w={10} $tone="#c1c1c1" />
                    <Rest />
                    <ArrowCell><Caret w={7} h={4} c="#444" /></ArrowCell>
                  </Track>
                </ObjectsBody>
              </ObjectsSection>
            </SideContent>
            <Track>
              <ArrowCell><Chevron /></ArrowCell>
              <Thumb $size={478} />
              <Rest />
              <ArrowCell><Chevron down /></ArrowCell>
            </Track>
          </SideBody>
        </Side>

        <Stage>
          <Canvas>
            <CanvasTitle>Expenses insights</CanvasTitle>
            <Board>
              <Quad>
                <Zone $kind="selected">
                  <Grip><i /><i /></Grip>
                  <ZoneTitle>Operating expenses</ZoneTitle>
                  <OperatingChart />
                  <ZoneTools>
                    <button aria-label="Remove"><Icon w={13} h={13}><path d="M1.500 1.500L11.500 11.500M11.500 1.500L1.500 11.500" strokeWidth="1.500" /></Icon></button>
                    <button aria-label="Go to sheet"><Icon w={13} h={13}><path d="M6 3.500H1.500V11.500H10.500V7M5 8L11 2M8 1.500H11.500V5" strokeWidth="1.400" /></Icon></button>
                    <button aria-label="Use as filter"><Icon w={13} h={13}><path d="M0.500 1H12.500L8 6.500V12L5 10.500V6.500Z" strokeWidth="1.300" /></Icon></button>
                    <button aria-label="More options"><Caret w={8} h={4} c="#fff" /></button>
                  </ZoneTools>
                </Zone>
                <Zone $kind="outlined">
                  <ZoneTitle>Fuel</ZoneTitle>
                  <FuelChart />
                </Zone>
                <Zone $kind="left">
                  <ZoneTitle>Rental Payment For Machinery</ZoneTitle>
                  <RentalChart />
                </Zone>
                <Zone $kind="right">
                  <ZoneTitle>Taxes &amp; Licenses</ZoneTitle>
                  <TaxChart />
                </Zone>
              </Quad>
              <Legends>
                <LegendTitle>Operating Expenses</LegendTitle>
                <RampBlock>
                  <Ramp $tone="blue" />
                  <RampEnds><span>3,474</span><span>9,16,307</span></RampEnds>
                </RampBlock>
                <LegendTitle>Rental Payment For Machin..</LegendTitle>
                <RampLine><span>10</span><Ramp $tone="brown" /><span>3,461</span></RampLine>
                <LegendTitle>Business types</LegendTitle>
                <KeyBox>
                  <KeyList>
                    {keyItems.map(([c, name], i) => (
                      <KeyItem key={i}><Swatch $c={c} />{name}</KeyItem>
                    ))}
                  </KeyList>
                  <Track>
                    <ArrowCell><Chevron /></ArrowCell>
                    <Thumb $size={183} />
                    <Rest />
                    <ArrowCell><Chevron down /></ArrowCell>
                  </Track>
                </KeyBox>
                <LegendTitle>Taxes And License</LegendTitle>
                <SizeKey><span />86,282</SizeKey>
              </Legends>
            </Board>
          </Canvas>
          <Rest />
          <Track>
            <ArrowCell><Chevron /></ArrowCell>
            <Thumb $size={551} />
            <Rest />
            <ArrowCell><Chevron down /></ArrowCell>
          </Track>
        </Stage>
      </Main>

      <TabStrip>
        <TabRow>
          <Tab $w={130} $lead><DiskIcon />Data Source</Tab>
          {Array.from({ length: 12 }, (_, i) => (
            <Tab key={i} $w={i < 9 ? 57 : 61}>{`Sheet ${i + 1}`}</Tab>
          ))}
          {[1, 2, 3].map((n) => (
            <Tab key={n} $w={103} $active={n === 3}><GridIcon />{`Dashboard ${n}`}</Tab>
          ))}
          {[1, 2].map((n) => (
            <Tab key={n} $w={72}><BookIcon />{`Story ${n}`}</Tab>
          ))}
        </TabRow>
        <AddTab aria-label="New worksheet">
          <Icon w={16} h={16}><path d="M8 12.500H1.500V1.500H12.500V7M5 10V7.500M7 10V5M9 9V6.500" /><path d="M12 8V16M8 12H16" strokeWidth="2" /></Icon>
        </AddTab>
        <AddTab aria-label="New dashboard">
          <Icon w={16} h={16}><path d="M8 11.500H1.500V1.500H12.500V7M7 1.500V11.500M1.500 6.500H12.500" /><path d="M12 8V16M8 12H16" strokeWidth="2" /></Icon>
        </AddTab>
        <AddTab aria-label="New story">
          <Icon w={16} h={16}><path d="M6.500 3C5 1.500 3 1.500 1.500 1.500V11C4 11 6 11.500 6.500 12.500M6.500 3C8 1.500 10 1.500 11.500 1.500V7M6.500 3V12.500" /><path d="M12 8V16M8 12H16" strokeWidth="2" /></Icon>
        </AddTab>
      </TabStrip>
    </Page>
  );
}
